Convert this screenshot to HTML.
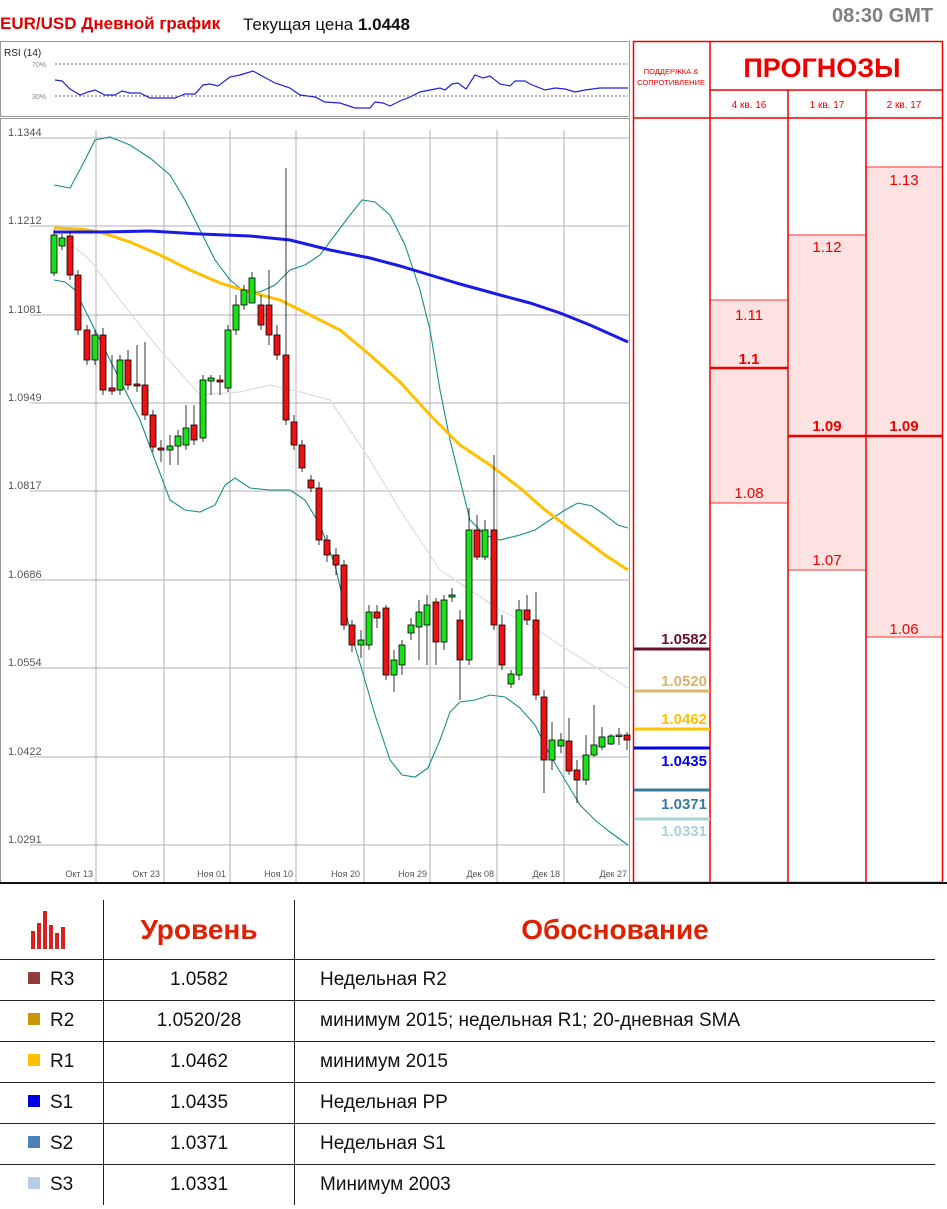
<!DOCTYPE html>
<html><head><meta charset="utf-8"><style>
body{margin:0;width:947px;height:1209px;background:#fff;font-family:"Liberation Sans",sans-serif;position:relative;overflow:hidden}
.t{position:absolute;white-space:nowrap}
table{position:absolute;left:0;top:900px;width:935px;border-collapse:collapse;font-family:"Liberation Sans",sans-serif}
td{height:40px;font-size:19px;color:#111;padding:0}
tr.r td{border-top:1.5px solid #222}
tr.h td{height:59px}
.c1{width:103px;border-right:1px solid #222}
.c2{width:190px;border-right:1px solid #222;text-align:center}
.c3{padding-left:25px}
.sq{display:inline-block;width:12px;height:12px;margin:0 10px 0 28px;vertical-align:1px}
</style></head><body>
<div class="t" style="left:0;top:14px;font-size:17px;color:#e00000;font-weight:bold">EUR/USD Дневной график</div>
<div class="t" style="left:243px;top:15px;font-size:17px;color:#111">Текущая цена <b>1.0448</b></div>
<div class="t" style="left:832px;top:5px;font-size:20px;color:#808080;font-weight:bold">08:30 GMT</div>
<svg style="position:absolute;left:0;top:0" width="947" height="890" xmlns="http://www.w3.org/2000/svg" font-family="Liberation Sans, sans-serif">
<rect x="0.5" y="41.5" width="629" height="75" fill="#fff" stroke="#999"/>
<text x="4" y="56" font-size="10" fill="#222">RSI (14)</text>
<text x="32" y="67" font-size="7" fill="#888">70%</text>
<text x="32" y="99" font-size="7" fill="#888">30%</text>
<line x1="55" y1="64" x2="628" y2="64" stroke="#666" stroke-dasharray="2,2"/>
<line x1="55" y1="96" x2="628" y2="96" stroke="#666" stroke-dasharray="2,2"/>
<polyline fill="none" stroke="#2020e0" stroke-width="1.2" points="55,80 62,81 70,89 80,95 88,92 95,90 105,95 115,95 122,91 130,93 140,93 150,98 160,98 175,98 185,94 195,94 203,85 210,84 218,86 230,77 240,75 253,71 262,76 275,83 290,88 300,95 315,97 325,102 340,103 355,108 370,108 375,102 383,103 390,106 400,101 410,97 420,92 430,90 440,88 445,90 452,84 458,83 466,89 475,75 483,78 490,76 500,84 510,86 515,81 525,81 530,84 545,90 555,88 565,89 575,92 585,90 600,88 628,88"/>
<rect x="0.5" y="118.5" width="629" height="764" fill="#fff" stroke="#999"/>
<g stroke="#b0b0b0" stroke-width="1">
<line x1="96" y1="130" x2="96" y2="882"/><line x1="164" y1="130" x2="164" y2="882"/><line x1="230" y1="130" x2="230" y2="882"/><line x1="296" y1="130" x2="296" y2="882"/><line x1="364" y1="130" x2="364" y2="882"/><line x1="430" y1="130" x2="430" y2="882"/><line x1="497" y1="130" x2="497" y2="882"/><line x1="564" y1="130" x2="564" y2="882"/>
<line x1="30" y1="138" x2="630" y2="138"/><line x1="30" y1="226" x2="630" y2="226"/><line x1="30" y1="315" x2="630" y2="315"/><line x1="30" y1="403" x2="630" y2="403"/><line x1="30" y1="491" x2="630" y2="491"/><line x1="30" y1="580" x2="630" y2="580"/><line x1="30" y1="668" x2="630" y2="668"/><line x1="30" y1="757" x2="630" y2="757"/><line x1="30" y1="845" x2="630" y2="845"/>
</g>
<g font-size="11" fill="#555">
<text x="8" y="136">1.1344</text><text x="8" y="224">1.1212</text><text x="8" y="313">1.1081</text><text x="8" y="401">1.0949</text><text x="8" y="489">1.0817</text><text x="8" y="578">1.0686</text><text x="8" y="666">1.0554</text><text x="8" y="755">1.0422</text><text x="8" y="843">1.0291</text>
</g>
<g font-size="9" fill="#555" text-anchor="end">
<text x="93" y="877">Окт 13</text><text x="160" y="877">Окт 23</text><text x="226" y="877">Ноя 01</text><text x="293" y="877">Ноя 10</text><text x="360" y="877">Ноя 20</text><text x="427" y="877">Ноя 29</text><text x="494" y="877">Дек 08</text><text x="560" y="877">Дек 18</text><text x="627" y="877">Дек 27</text>
</g>
<polyline fill="none" stroke="#ddd" stroke-width="1.2" points="54,230 90,260 120,300 160,350 200,395 240,392 270,385 300,392 330,400 370,460 400,510 440,570 470,590 500,610 530,625 560,645 600,670 628,688"/>
<polyline fill="none" stroke="#1a8c8c" stroke-width="1.1" points="54,185 70,188 85,160 95,140 110,137 130,145 150,158 170,175 185,200 200,230 215,260 230,280 245,292 260,292 275,285 290,270 305,265 320,255 335,235 350,215 362,200 375,202 390,215 405,245 420,290 430,330 440,390 450,440 460,480 470,520 485,535 500,540 520,535 535,530 550,520 565,510 578,503 592,506 605,515 618,525 628,528"/>
<polyline fill="none" stroke="#1a8c8c" stroke-width="1.1" points="54,280 65,282 75,290 90,320 110,360 125,390 140,420 155,460 170,500 185,510 200,512 215,505 225,485 235,478 250,488 270,490 290,490 305,500 320,525 335,565 350,630 362,670 375,715 390,760 402,775 415,777 428,768 440,740 450,712 460,702 475,700 490,695 505,697 520,708 535,725 550,755 565,780 580,805 595,820 610,832 628,845"/>
<polyline fill="none" stroke="#ffc000" stroke-width="3" points="54,228 80,229 100,232 130,242 160,255 190,270 220,283 250,292 280,300 310,315 340,330 370,355 400,382 430,415 460,445 490,465 520,488 545,510 565,525 585,540 605,555 628,570"/>
<polyline fill="none" stroke="#1a1ae6" stroke-width="3" points="54,232 100,232 150,231 200,234 250,236 290,240 330,250 370,258 400,266 430,275 460,284 500,295 530,303 560,313 590,325 628,342"/>
<g stroke="#000" stroke-width="0.8">
<line x1="54" y1="230" x2="54" y2="276"/><rect x="51" y="235" width="6" height="38" fill="#19e019"/>
<line x1="62" y1="234" x2="62" y2="250"/><rect x="59" y="238" width="6" height="8" fill="#19e019"/>
<line x1="70" y1="232" x2="70" y2="280"/><rect x="67" y="236" width="6" height="39" fill="#ee1111"/>
<line x1="78" y1="270" x2="78" y2="335"/><rect x="75" y="275" width="6" height="55" fill="#ee1111"/>
<line x1="87" y1="325" x2="87" y2="365"/><rect x="84" y="330" width="6" height="30" fill="#ee1111"/>
<line x1="95" y1="330" x2="95" y2="365"/><rect x="92" y="335" width="6" height="25" fill="#19e019"/>
<line x1="103" y1="328" x2="103" y2="395"/><rect x="100" y="335" width="6" height="55" fill="#ee1111"/>
<line x1="112" y1="355" x2="112" y2="395"/><rect x="109" y="388" width="6" height="3" fill="#ee1111"/>
<line x1="120" y1="355" x2="120" y2="395"/><rect x="117" y="360" width="6" height="30" fill="#19e019"/>
<line x1="128" y1="350" x2="128" y2="390"/><rect x="125" y="360" width="6" height="25" fill="#ee1111"/>
<line x1="137" y1="345" x2="137" y2="392"/><rect x="134" y="384" width="6" height="2" fill="#ee1111"/>
<line x1="145" y1="342" x2="145" y2="420"/><rect x="142" y="385" width="6" height="30" fill="#ee1111"/>
<line x1="153" y1="410" x2="153" y2="452"/><rect x="150" y="415" width="6" height="32" fill="#ee1111"/>
<line x1="161" y1="440" x2="161" y2="462"/><rect x="158" y="448" width="6" height="2" fill="#ee1111"/>
<line x1="170" y1="435" x2="170" y2="465"/><rect x="167" y="446" width="6" height="4" fill="#19e019"/>
<line x1="178" y1="430" x2="178" y2="465"/><rect x="175" y="436" width="6" height="10" fill="#19e019"/>
<line x1="186" y1="405" x2="186" y2="450"/><rect x="183" y="428" width="6" height="17" fill="#19e019"/>
<line x1="194" y1="405" x2="194" y2="445"/><rect x="191" y="425" width="6" height="15" fill="#ee1111"/>
<line x1="203" y1="375" x2="203" y2="442"/><rect x="200" y="380" width="6" height="58" fill="#19e019"/>
<line x1="211" y1="375" x2="211" y2="395"/><rect x="208" y="378" width="6" height="3" fill="#19e019"/>
<line x1="220" y1="375" x2="220" y2="395"/><rect x="217" y="380" width="6" height="2" fill="#ee1111"/>
<line x1="228" y1="325" x2="228" y2="392"/><rect x="225" y="330" width="6" height="58" fill="#19e019"/>
<line x1="236" y1="295" x2="236" y2="335"/><rect x="233" y="305" width="6" height="25" fill="#19e019"/>
<line x1="244" y1="285" x2="244" y2="310"/><rect x="241" y="290" width="6" height="15" fill="#19e019"/>
<line x1="252" y1="272" x2="252" y2="300"/><rect x="249" y="278" width="6" height="25" fill="#19e019"/>
<line x1="261" y1="295" x2="261" y2="330"/><rect x="258" y="305" width="6" height="20" fill="#ee1111"/>
<line x1="269" y1="270" x2="269" y2="345"/><rect x="266" y="305" width="6" height="30" fill="#ee1111"/>
<line x1="277" y1="325" x2="277" y2="360"/><rect x="274" y="335" width="6" height="20" fill="#ee1111"/>
<line x1="286" y1="168" x2="286" y2="425"/><rect x="283" y="355" width="6" height="65" fill="#ee1111"/>
<line x1="294" y1="415" x2="294" y2="450"/><rect x="291" y="422" width="6" height="23" fill="#ee1111"/>
<line x1="302" y1="440" x2="302" y2="472"/><rect x="299" y="445" width="6" height="23" fill="#ee1111"/>
<line x1="311" y1="475" x2="311" y2="492"/><rect x="308" y="480" width="6" height="8" fill="#ee1111"/>
<line x1="319" y1="482" x2="319" y2="545"/><rect x="316" y="488" width="6" height="52" fill="#ee1111"/>
<line x1="327" y1="535" x2="327" y2="562"/><rect x="324" y="540" width="6" height="15" fill="#ee1111"/>
<line x1="336" y1="548" x2="336" y2="575"/><rect x="333" y="555" width="6" height="10" fill="#ee1111"/>
<line x1="344" y1="560" x2="344" y2="630"/><rect x="341" y="565" width="6" height="60" fill="#ee1111"/>
<line x1="352" y1="620" x2="352" y2="652"/><rect x="349" y="625" width="6" height="20" fill="#ee1111"/>
<line x1="361" y1="630" x2="361" y2="658"/><rect x="358" y="640" width="6" height="5" fill="#19e019"/>
<line x1="369" y1="605" x2="369" y2="650"/><rect x="366" y="612" width="6" height="33" fill="#19e019"/>
<line x1="377" y1="605" x2="377" y2="628"/><rect x="374" y="612" width="6" height="6" fill="#ee1111"/>
<line x1="386" y1="605" x2="386" y2="680"/><rect x="383" y="608" width="6" height="67" fill="#ee1111"/>
<line x1="394" y1="650" x2="394" y2="692"/><rect x="391" y="660" width="6" height="15" fill="#19e019"/>
<line x1="402" y1="640" x2="402" y2="675"/><rect x="399" y="645" width="6" height="20" fill="#19e019"/>
<line x1="411" y1="618" x2="411" y2="640"/><rect x="408" y="625" width="6" height="8" fill="#19e019"/>
<line x1="419" y1="600" x2="419" y2="660"/><rect x="416" y="612" width="6" height="15" fill="#19e019"/>
<line x1="427" y1="595" x2="427" y2="665"/><rect x="424" y="605" width="6" height="20" fill="#19e019"/>
<line x1="436" y1="598" x2="436" y2="665"/><rect x="433" y="602" width="6" height="40" fill="#ee1111"/>
<line x1="444" y1="595" x2="444" y2="650"/><rect x="441" y="600" width="6" height="42" fill="#19e019"/>
<line x1="452" y1="588" x2="452" y2="602"/><rect x="449" y="595" width="6" height="2" fill="#19e019"/>
<line x1="460" y1="610" x2="460" y2="700"/><rect x="457" y="620" width="6" height="40" fill="#ee1111"/>
<line x1="469" y1="508" x2="469" y2="665"/><rect x="466" y="530" width="6" height="130" fill="#19e019"/>
<line x1="477" y1="515" x2="477" y2="560"/><rect x="474" y="530" width="6" height="27" fill="#ee1111"/>
<line x1="485" y1="520" x2="485" y2="560"/><rect x="482" y="530" width="6" height="27" fill="#19e019"/>
<line x1="494" y1="455" x2="494" y2="630"/><rect x="491" y="530" width="6" height="95" fill="#ee1111"/>
<line x1="502" y1="615" x2="502" y2="670"/><rect x="499" y="625" width="6" height="40" fill="#ee1111"/>
<line x1="511" y1="670" x2="511" y2="688"/><rect x="508" y="674" width="6" height="10" fill="#19e019"/>
<line x1="519" y1="600" x2="519" y2="680"/><rect x="516" y="610" width="6" height="65" fill="#19e019"/>
<line x1="527" y1="595" x2="527" y2="625"/><rect x="524" y="610" width="6" height="10" fill="#ee1111"/>
<line x1="536" y1="592" x2="536" y2="700"/><rect x="533" y="620" width="6" height="75" fill="#ee1111"/>
<line x1="544" y1="690" x2="544" y2="793"/><rect x="541" y="697" width="6" height="63" fill="#ee1111"/>
<line x1="552" y1="722" x2="552" y2="770"/><rect x="549" y="740" width="6" height="20" fill="#19e019"/>
<line x1="561" y1="733" x2="561" y2="753"/><rect x="558" y="740" width="6" height="6" fill="#19e019"/>
<line x1="569" y1="718" x2="569" y2="775"/><rect x="566" y="741" width="6" height="30" fill="#ee1111"/>
<line x1="577" y1="760" x2="577" y2="803"/><rect x="574" y="770" width="6" height="10" fill="#ee1111"/>
<line x1="586" y1="735" x2="586" y2="785"/><rect x="583" y="755" width="6" height="25" fill="#19e019"/>
<line x1="594" y1="705" x2="594" y2="757"/><rect x="591" y="745" width="6" height="10" fill="#19e019"/>
<line x1="602" y1="727" x2="602" y2="750"/><rect x="599" y="737" width="6" height="10" fill="#19e019"/>
<line x1="611" y1="734" x2="611" y2="745"/><rect x="608" y="736" width="6" height="8" fill="#19e019"/>
<line x1="619" y1="728" x2="619" y2="745"/><rect x="616" y="735" width="6" height="1.5" fill="#19e019"/>
<line x1="627" y1="732" x2="627" y2="750"/><rect x="624" y="735" width="6" height="5" fill="#ee1111"/>
</g>
<rect x="711" y="300" width="77" height="203" fill="#fde2e2"/>
<rect x="789" y="235" width="77" height="335" fill="#fde2e2"/>
<rect x="866" y="167" width="77" height="470" fill="#fde2e2"/>
<g stroke="#f33" stroke-width="1">
<line x1="710" y1="300" x2="788" y2="300"/><line x1="710" y1="503" x2="788" y2="503"/>
<line x1="788" y1="235" x2="866" y2="235"/><line x1="788" y1="570" x2="866" y2="570"/>
<line x1="866" y1="167" x2="943" y2="167"/><line x1="866" y1="637" x2="943" y2="637"/>
</g>
<line x1="710" y1="368" x2="788" y2="368" stroke="#e00" stroke-width="2.5"/>
<line x1="788" y1="436" x2="943" y2="436" stroke="#e00" stroke-width="2.5"/>
<g stroke="#e00" stroke-width="1.5" fill="none">
<rect x="633.5" y="41.5" width="309" height="841"/>
<line x1="633" y1="118" x2="943" y2="118"/>
<line x1="710" y1="90" x2="943" y2="90"/>
<line x1="710" y1="41" x2="710" y2="882"/><line x1="788" y1="90" x2="788" y2="882"/><line x1="866" y1="90" x2="866" y2="882"/>
</g>
<g fill="#e00" text-anchor="middle">
<text x="671" y="74" font-size="7.5">ПОДДЕРЖКА &amp;</text>
<text x="671" y="85" font-size="7.5">СОПРОТИВЛЕНИЕ</text>
<text x="822" y="77" font-size="27" font-weight="bold">ПРОГНОЗЫ</text>
<text x="749" y="108" font-size="10">4 кв. 16</text><text x="827" y="108" font-size="10">1 кв. 17</text><text x="904" y="108" font-size="10">2 кв. 17</text>
<text x="749" y="320" font-size="15">1.11</text><text x="749" y="364" font-size="15" font-weight="bold">1.1</text><text x="749" y="498" font-size="15">1.08</text>
<text x="827" y="252" font-size="15">1.12</text><text x="827" y="431" font-size="15" font-weight="bold">1.09</text><text x="827" y="565" font-size="15">1.07</text>
<text x="904" y="185" font-size="15">1.13</text><text x="904" y="431" font-size="15" font-weight="bold">1.09</text><text x="904" y="634" font-size="15">1.06</text>
</g>
<g font-size="15" font-weight="bold" text-anchor="end">
<line x1="634" y1="649" x2="710" y2="649" stroke="#6b0f2f" stroke-width="3"/><text x="707" y="644" fill="#6b0f2f">1.0582</text>
<line x1="634" y1="691" x2="710" y2="691" stroke="#d9b46a" stroke-width="3"/><text x="707" y="686" fill="#d9b46a">1.0520</text>
<line x1="634" y1="729" x2="710" y2="729" stroke="#ffc000" stroke-width="3"/><text x="707" y="724" fill="#ffc000">1.0462</text>
<line x1="634" y1="748" x2="710" y2="748" stroke="#0000ee" stroke-width="3"/><text x="707" y="766" fill="#0000ee">1.0435</text>
<line x1="634" y1="790" x2="710" y2="790" stroke="#3a7a9a" stroke-width="3"/><text x="707" y="809" fill="#3a7a9a">1.0371</text>
<line x1="634" y1="819" x2="710" y2="819" stroke="#a8d4d4" stroke-width="3"/><text x="707" y="836" fill="#a8d4d4">1.0331</text>
</g>
<line x1="0" y1="883" x2="947" y2="883" stroke="#111" stroke-width="2"/>
</svg>
<table>
<tr class="h"><td class="c1"></td><td class="c2" style="color:#e02000;font-size:28px;font-weight:bold">Уровень</td><td style="color:#e02000;font-size:28px;font-weight:bold;text-align:center">Обоснование</td></tr>
<tr class="r"><td class="c1"><span class="sq" style="background:#943c3c"></span>R3</td><td class="c2">1.0582</td><td class="c3">Недельная R2</td></tr>
<tr class="r"><td class="c1"><span class="sq" style="background:#c9960c"></span>R2</td><td class="c2">1.0520/28</td><td class="c3">минимум 2015; недельная R1; 20-дневная SMA</td></tr>
<tr class="r"><td class="c1"><span class="sq" style="background:#ffc000"></span>R1</td><td class="c2">1.0462</td><td class="c3">минимум 2015</td></tr>
<tr class="r"><td class="c1"><span class="sq" style="background:#0000e0"></span>S1</td><td class="c2">1.0435</td><td class="c3">Недельная PP</td></tr>
<tr class="r"><td class="c1"><span class="sq" style="background:#4a82b8"></span>S2</td><td class="c2">1.0371</td><td class="c3">Недельная S1</td></tr>
<tr class="r"><td class="c1"><span class="sq" style="background:#b8cce4"></span>S3</td><td class="c2">1.0331</td><td class="c3">Минимум 2003</td></tr>
</table>
<svg style="position:absolute;left:31px;top:911px" width="38" height="38"><g fill="#d82020"><rect x="0" y="20" width="4" height="18"/><rect x="6" y="12" width="4" height="26"/><rect x="12" y="0" width="4" height="38"/><rect x="18" y="14" width="4" height="24"/><rect x="24" y="22" width="4" height="16"/><rect x="30" y="16" width="4" height="22"/></g></svg>
</body></html>
